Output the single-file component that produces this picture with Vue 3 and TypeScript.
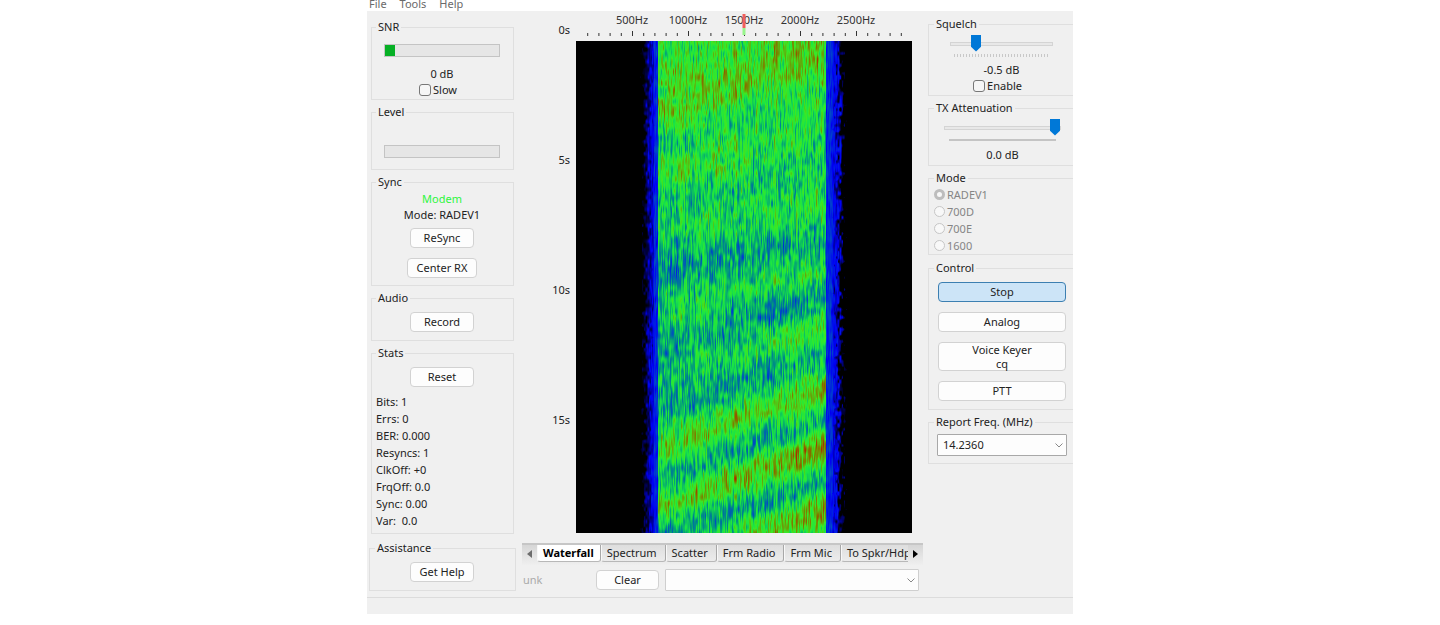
<script setup lang="ts">
import { onMounted, ref } from 'vue'

const menus = ['File', 'Tools', 'Help']
const stats = [
  'Bits: 1', 'Errs: 0', 'BER: 0.000', 'Resyncs: 1',
  'ClkOff: +0', 'FrqOff: 0.0', 'Sync: 0.00', 'Var:  0.0',
]
const tabs = ['Waterfall', 'Spectrum', 'Scatter', 'Frm Radio', 'Frm Mic', 'To Spkr/Hdphns']
const times = ['0s', '5s', '10s', '15s']
const modes = ['RADEV1', '700D', '700E', '1600']
const maxHz = 3000
const ticks = Array.from({ length: 29 }, (_, i) => (i + 1) * 100)
const labels = [500, 1000, 1500, 2000, 2500]
const pct = (hz: number) => `${(hz / maxHz) * 100}%`

const activeTab = ref('Waterfall')
const mode = ref('RADEV1')
const squelch = ref(22)
const attenuation = ref(100)
const slow = ref(false)
const squelchOn = ref(false)
const canvas = ref<HTMLCanvasElement | null>(null)

// Fading bands across the passband: y at left edge, y at right edge, level left, level right
const bands: [number, number, number, number][] = [
  [-60, -110, 0.6, 0.6],
  [5, -40, 0.63, 0.62],
  [74, 6, 0.69, 0.71],
  [106, 50, 0.55, 0.63],
  [139, 84, 0.64, 0.6],
  [168, 125, 0.54, 0.54],
  [187, 163, 0.57, 0.6],
  [230, 203, 0.47, 0.49],
  [266, 228, 0.57, 0.61],
  [312, 251, 0.48, 0.47],
  [336, 284, 0.52, 0.64],
  [368, 314, 0.48, 0.51],
  [410, 344, 0.65, 0.71],
  [438, 378, 0.49, 0.49],
  [466, 404, 0.68, 0.77],
  [494, 440, 0.48, 0.5],
  [532, 463, 0.6, 0.75],
  [570, 510, 0.5, 0.5],
]

const colours: [number, number, number, number][] = [
  [0, 0, 0, 0],
  [0.22, 0, 0, 245],
  [0.34, 0, 70, 200],
  [0.46, 0, 145, 130],
  [0.59, 25, 228, 70],
  [0.67, 60, 232, 35],
  [0.8, 120, 135, 0],
  [0.95, 185, 20, 0],
]

function hash(x: number, y: number): number {
  let h = Math.imul(x, 374761393) + Math.imul(y, 668265263)
  h = Math.imul(h ^ (h >>> 13), 1274126177)
  return ((h ^ (h >>> 16)) >>> 0) / 4294967295
}

function noise(x: number, y: number, seed: number): number {
  const xi = Math.floor(x)
  const yi = Math.floor(y)
  const fx = x - xi
  const fy = (y - yi) * (y - yi) * (3 - 2 * (y - yi))
  const o = seed * 1013
  const a = hash(xi + o, yi) * (1 - fx) + hash(xi + 1 + o, yi) * fx
  const b = hash(xi + o, yi + 1) * (1 - fx) + hash(xi + 1 + o, yi + 1) * fx
  return (a * (1 - fy) + b * fy) * 2 - 1
}

function levelAt(u: number, y: number): number {
  for (let i = 1; i < bands.length; i++) {
    const b = bands[i]
    const yb = b[0] + (b[1] - b[0]) * u
    if (y <= yb) {
      const a = bands[i - 1]
      const ya = a[0] + (a[1] - a[0]) * u
      const t = (y - ya) / (yb - ya)
      const s = t * t * (3 - 2 * t)
      return (a[2] + (a[3] - a[2]) * u) * (1 - s) + (b[2] + (b[3] - b[2]) * u) * s
    }
  }
  return 0.5
}

function colour(v: number): number[] {
  for (let i = 1; i < colours.length; i++) {
    if (v <= colours[i][0]) {
      const a = colours[i - 1]
      const b = colours[i]
      const t = Math.max(0, (v - a[0]) / (b[0] - a[0]))
      return [1, 2, 3].map((c) => a[c] + (b[c] - a[c]) * t)
    }
  }
  return [185, 20, 0]
}

onMounted(() => {
  const el = canvas.value
  const ctx = el?.getContext('2d')
  if (!el || !ctx) return
  const img = ctx.createImageData(el.width, el.height)
  for (let y = 0; y < el.height; y++) {
    for (let x = 0; x < el.width; x++) {
      // Each column drifts at its own phase, so the streaks do not line up in rows
      const streak = noise(x, y / 10 + hash(x, 9) * 10, 1)
      const mid = noise(x * 0.4, y / 6, 2)
      let v = 0
      if (x >= 82 && x < 250) {
        const u = (x - 82) / 168
        const column = noise(x * 0.9, 0, 7)
        v = levelAt(u, y) + streak * 0.1 + mid * 0.08 + column * 0.05
        v += noise(x / 14, y / 12, 4) * 0.03
        v = Math.max(v, 0.28)
      } else if (x > 62 && x < 82) {
        const edge = Math.min(1, Math.max(0, (x - 67 + noise(x / 2, y / 4, 3) * 4) / 8))
        v = edge * (0.2 + streak * 0.06 + mid * 0.04 + (x > 77 ? 0.08 : 0))
      } else if (x >= 250 && x < 274) {
        const edge = Math.min(1, Math.max(0, (266 - x + noise(x / 2, y / 4, 3) * 5) / 6))
        v = edge * (0.22 + streak * 0.06 + mid * 0.04 + (x < 257 ? 0.06 : 0))
      }
      const [r, g, b] = colour(v)
      const p = (y * el.width + x) * 4
      img.data[p] = r
      img.data[p + 1] = g
      img.data[p + 2] = b
      img.data[p + 3] = 255
    }
  }
  ctx.putImageData(img, 0, 0)
})
</script>

<template>
  <div class="window">
    <nav class="menu">
      <a v-for="m in menus" :key="m" href="#">{{ m }}</a>
    </nav>

    <div class="body">
      <aside class="left">
        <fieldset class="group">
          <legend>SNR</legend>
          <div class="meter snr" role="meter" aria-label="SNR"><span class="fill"></span></div>
          <span>0 dB</span>
          <label class="check"><input v-model="slow" type="checkbox" />Slow</label>
        </fieldset>
        <fieldset class="group">
          <legend>Level</legend>
          <div class="meter level" role="meter" aria-label="Level"></div>
        </fieldset>
        <fieldset class="group sync">
          <legend>Sync</legend>
          <span class="modem">Modem</span>
          <span>Mode: RADEV1</span>
          <button class="btn resync">ReSync</button>
          <button class="btn center-rx">Center RX</button>
        </fieldset>
        <fieldset class="group action">
          <legend>Audio</legend>
          <button class="btn">Record</button>
        </fieldset>
        <fieldset class="group action">
          <legend>Stats</legend>
          <button class="btn">Reset</button>
          <ul class="stats">
            <li v-for="s in stats" :key="s">{{ s }}</li>
          </ul>
        </fieldset>
        <fieldset class="group action assistance">
          <legend>Assistance</legend>
          <button class="btn">Get Help</button>
        </fieldset>
      </aside>

      <main class="center">
        <div class="notebook">
          <div class="plot">
            <div class="times">
              <span v-for="t in times" :key="t">{{ t }}</span>
            </div>
            <div class="chart">
              <svg class="ruler" width="100%" height="30">
                <rect v-for="t in ticks" :key="t" :x="pct(t)" :y="t % 500 ? 22 : 20" width="1" :height="t % 500 ? 3 : 5" fill="#333" />
                <text v-for="l in labels" :key="l" :x="pct(l)" y="13" text-anchor="middle">{{ l }}Hz</text>
                <line x1="50%" x2="50%" y1="3" y2="17" stroke="#f0605c" stroke-width="3" />
                <line x1="50%" x2="50%" y1="17" y2="24" stroke="#98f58c" stroke-width="3" />
              </svg>
              <canvas ref="canvas" class="waterfall" width="336" height="492"></canvas>
            </div>
          </div>
          <div class="tabbar" role="tablist">
            <button class="arrow" aria-label="Scroll tabs left">
              <svg width="5" height="8" viewBox="0 0 5 8"><path d="M5 0v8L0 4z" fill="#6d6d6d" /></svg>
            </button>
            <div class="tabs">
              <button
                v-for="t in tabs"
                :key="t"
                role="tab"
                class="tab"
                :class="{ active: t === activeTab }"
                :aria-selected="t === activeTab"
                @click="activeTab = t"
              >{{ t }}</button>
            </div>
            <button class="arrow" aria-label="Scroll tabs right">
              <svg width="5" height="8" viewBox="0 0 5 8"><path d="M0 0v8l5-4z" fill="#000" /></svg>
            </button>
          </div>
        </div>
        <div class="callrow">
          <span class="unk">unk</span>
          <button class="btn clear">Clear</button>
          <div class="combo">
            <select aria-label="Received callsigns"><option></option></select>
            <svg width="8" height="5" viewBox="0 0 8 5"><path d="M.5.5 4 4 7.500.5" fill="none" stroke="#888" /></svg>
          </div>
        </div>
      </main>

      <aside class="right">
        <fieldset class="group squelch">
          <legend>Squelch</legend>
          <input v-model="squelch" class="slider" type="range" min="0" max="100" aria-label="Squelch" />
          <div class="dots"></div>
          <span>-0.5 dB</span>
          <label class="check"><input v-model="squelchOn" type="checkbox" />Enable</label>
        </fieldset>
        <fieldset class="group tx">
          <legend>TX Attenuation</legend>
          <input v-model="attenuation" class="slider" type="range" min="0" max="100" aria-label="TX Attenuation" />
          <div class="bar"></div>
          <span>0.0 dB</span>
        </fieldset>
        <fieldset class="group modes">
          <legend>Mode</legend>
          <label v-for="m in modes" :key="m" class="radio">
            <input v-model="mode" type="radio" name="mode" :value="m" disabled />{{ m }}
          </label>
        </fieldset>
        <fieldset class="group control">
          <legend>Control</legend>
          <button class="btn stop">Stop</button>
          <button class="btn">Analog</button>
          <button class="btn keyer">Voice Keyer<br />cq</button>
          <button class="btn">PTT</button>
        </fieldset>
        <fieldset class="group report">
          <legend>Report Freq. (MHz)</legend>
          <div class="combo dark">
            <select aria-label="Report Freq. (MHz)"><option>14.2360</option></select>
            <svg width="8" height="5" viewBox="0 0 8 5"><path d="M.5.5 4 4 7.500.5" fill="none" stroke="#888" /></svg>
          </div>
        </fieldset>
      </aside>
    </div>
    <footer class="status"></footer>
  </div>
</template>

<style>
body {
  margin: 0;
  background: #fff;
}
</style>

<style scoped>
.window {
  max-width: 706px;
  margin: 0 auto;
  overflow: hidden;
  background: #f0f0f0;
  color: #222;
  font: 11px/16px "Noto Sans", "Open Sans", sans-serif;
}
.window * {
  box-sizing: border-box;
}
button,
select {
  font: inherit;
  color: inherit;
}
.menu {
  display: flex;
  align-items: center;
  gap: 13px;
  height: 11px;
  padding: 0 3px 3px 2px;
  background: #fff;
  line-height: 8px;
}
.menu a {
  color: #6a6a6a;
  text-decoration: none;
}
.body {
  display: grid;
  grid-template-columns: 150px minmax(0, 1fr) 145px;
  gap: 5px;
}
.left,
.right {
  display: flex;
  flex-direction: column;
  gap: 4px;
}
.left {
  padding: 8px 3px 6px 4px;
}
.right {
  padding-top: 5px;
}
.group {
  display: flex;
  flex-direction: column;
  align-items: center;
  min-width: 0;
  margin: 0;
  padding: 0 13px 1px 12px;
  border: 1px solid #dfdfdf;
}
.group legend {
  padding: 0 2px;
  margin-left: -8px;
}
.meter {
  width: 100%;
  height: 13px;
  border: 1px solid #c4c4c4;
  background: #e6e6e6;
}
.snr {
  margin: 9px 0;
}
.level {
  margin: 25px 0 10px;
}
.fill {
  display: block;
  width: 9%;
  height: 100%;
  background: #06b025;
}
.check {
  display: flex;
  align-items: center;
  gap: 2px;
  padding-right: 8px;
}
.check input {
  appearance: none;
  width: 12px;
  height: 12px;
  margin: 0;
  border: 1px solid #777;
  border-radius: 3px;
  background: #f6f6f6;
}
.modem {
  margin-top: 1px;
  color: #2df53c;
}
.btn {
  width: 64px;
  height: 20px;
  padding: 0;
  border: 1px solid #d2d2d2;
  border-radius: 4px;
  background: #fdfdfd;
  line-height: 16px;
}
.resync {
  margin-top: 5px;
}
.center-rx {
  width: 70px;
  margin: 10px 0 6px;
}
.action .btn {
  margin: 6px 0 7px;
}
.action .stats {
  align-self: stretch;
  margin: -1px 0 3px -8px;
  padding: 0;
  list-style: none;
  line-height: 17px;
  white-space: pre;
}
.assistance {
  margin: 2px -2px 0;
}
.assistance legend {
  margin-left: -7px;
}
.center {
  min-width: 0;
}
.plot {
  display: grid;
  grid-template-columns: 54px minmax(0, 1fr) 11px;
  height: 532px;
}
.times {
  display: flex;
  flex-direction: column;
  padding: 11px 6px 0 0;
  text-align: right;
}
.times span {
  flex: 0 0 130px;
}
.times span:last-child {
  flex-basis: 20px;
}
.ruler {
  display: block;
  overflow: visible;
}
.ruler text {
  fill: #333;
}
.waterfall {
  display: block;
  width: 100%;
  height: 492px;
  background: #000;
}
.tabbar {
  display: flex;
  align-items: stretch;
  height: 22px;
  border-top: 2px solid #c6c6c6;
  background: linear-gradient(#d6d6d6, #efefef);
}
.tabs {
  display: flex;
  flex: 1;
  min-width: 0;
  height: 17px;
  overflow: hidden;
}
.tab {
  flex: none;
  padding: 0 8px 0 5px;
  border: 0;
  border-right: 1px solid #a8a8a8;
  border-bottom: 1px solid #b8b8b8;
  border-left: 1px solid #f8f8f8;
  border-radius: 0 0 3px 3px;
  background: linear-gradient(#dedede, #ececec);
  line-height: 16px;
}
.tab.active {
  padding: 0 6px 0 5px;
  background: #fff;
  color: #000;
  font-weight: 700;
}
.arrow {
  display: flex;
  align-items: center;
  justify-content: center;
  width: 15px;
  height: 17px;
  padding: 0;
  border: 0;
  background: none;
}
.callrow {
  display: flex;
  align-items: center;
  gap: 6px;
  padding: 4px 4px 0 1px;
}
.unk {
  width: 67px;
  color: #aaa;
}
.btn.clear {
  width: 63px;
}
.combo {
  display: grid;
  flex: 1;
  align-items: center;
}
.combo select {
  grid-area: 1 / 1;
  appearance: none;
  width: 100%;
  height: 22px;
  padding: 0 5px;
  border: 1px solid #cfcfcf;
  border-radius: 1px;
  background: #fdfdfd;
}
.combo.dark select {
  border-color: #a8a8a8;
}
.combo svg {
  grid-area: 1 / 1;
  justify-self: end;
  margin-right: 4px;
  pointer-events: none;
}
.right .group {
  border-right: 0;
}
.slider {
  appearance: none;
  width: 100%;
  height: 17px;
  margin: 0;
  background: none;
}
.slider::-webkit-slider-runnable-track {
  height: 4px;
  border: 1px solid #d4d4d4;
  background: #e8e8e8;
}
.slider::-webkit-slider-thumb {
  appearance: none;
  width: 10px;
  height: 17px;
  margin-top: -8px;
  background: #0078d7;
  clip-path: polygon(0 0, 100% 0, 100% 72%, 50% 100%, 0 72%);
}
.squelch {
  padding: 3px 20px 1px 21px;
}
.dots {
  width: 95px;
  height: 3px;
  margin: 2px 0 5px;
  background: repeating-linear-gradient(90deg, #c8c8c8 0 1px, transparent 1px 3px);
}
.squelch legend {
  margin-left: -16px;
}
.tx {
  padding: 3px 12px 2px 15px;
}
.tx legend {
  margin-left: -10px;
}
.bar {
  width: 107px;
  height: 2px;
  margin: 3px 0 6px;
  background: #c4c4c4;
}
.modes {
  align-items: stretch;
  padding: 0 5px;
}
.modes legend {
  margin-left: 0;
}
.radio {
  display: flex;
  align-items: center;
  gap: 2px;
  height: 17px;
  color: #858585;
}
.radio input {
  appearance: none;
  width: 11px;
  height: 11px;
  margin: 0;
  border: 1px solid #c6c6c6;
  border-radius: 50%;
  background: #f8f8f8;
}
.radio input:checked {
  border: 3px solid #bdbdbd;
}
.control {
  gap: 10px;
  margin-top: 1px;
  padding: 6px 7px 8px 9px;
}
.control legend {
  margin-left: -4px;
}
.control .btn {
  width: 100%;
}
.control .keyer {
  height: 29px;
  line-height: 14px;
}
.control .stop {
  border-color: #3c7fb1;
  background: #cce4f7;
}
.report {
  padding: 4px 6px 7px 8px;
}
.report legend {
  margin-left: -3px;
}
.report .combo {
  flex: none;
  width: 100%;
}
.status {
  height: 17px;
  border-top: 1px solid #dcdcdc;
}
</style>
